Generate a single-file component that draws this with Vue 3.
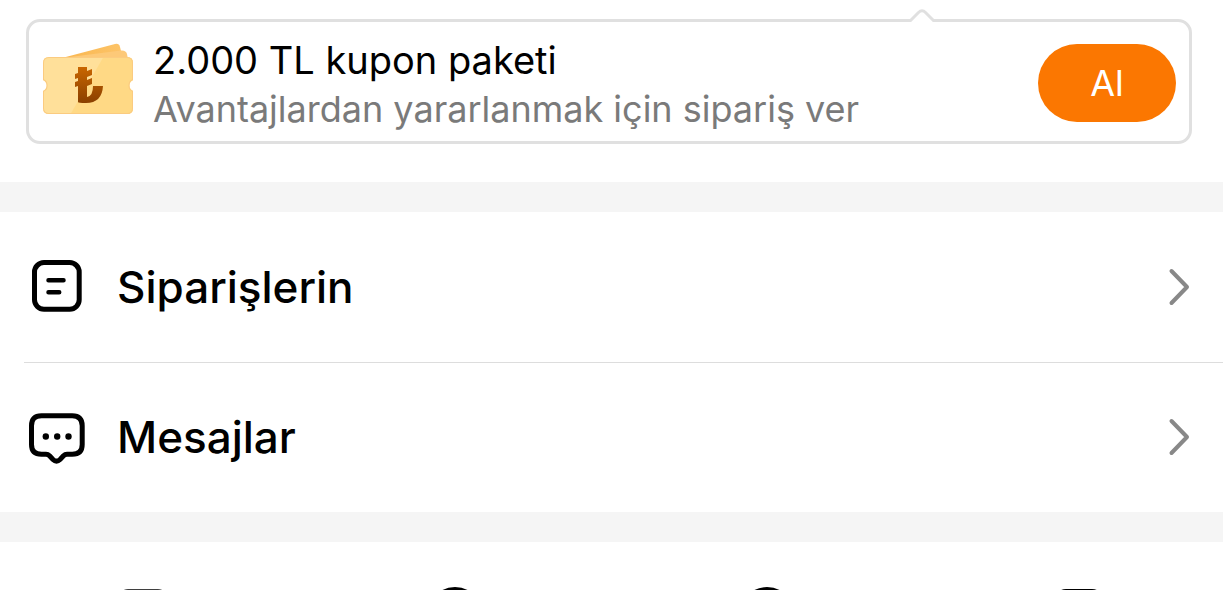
<script setup>
const rows = [
  { id: 'orders', label: 'Siparişlerin' },
  { id: 'messages', label: 'Mesajlar' },
]
</script>

<template>
  <main class="page">
    <section class="promo">
      <div class="card">
        <svg class="pointer" viewBox="0 0 28 14" aria-hidden="true">
          <path d="M2 11H26V14H2Z" fill="#fff" />
          <path d="M1 12.5H2.5L10.5 4.5Q14 1 17.5 4.5L25.5 12.5H27" fill="#fff" stroke="#e0e0e0" stroke-width="3" />
        </svg>
        <svg class="ticket" viewBox="0 0 92 72" aria-hidden="true">
          <defs>
            <linearGradient id="lira" x1="0" y1="0" x2="0" y2="1">
              <stop offset="0" stop-color="#c96600" />
              <stop offset="1" stop-color="#8a4000" />
            </linearGradient>
            <linearGradient id="back" x1="0" y1="0" x2="1" y2="0">
              <stop offset="0" stop-color="#f9b64f" />
              <stop offset="1" stop-color="#fdc468" />
            </linearGradient>
            <clipPath id="face">
              <path d="M7 14H85Q91 14 91 20V37A6 6 0 0 0 91 48V65Q91 71 85 71H7Q1 71 1 65V48A6 6 0 0 0 1 37V20Q1 14 7 14Z" />
            </clipPath>
          </defs>
          <path d="M20 15L73 1Q77 0 78 4L81 16Z" fill="url(#back)" />
          <path d="M20 15L79 7.500Q84 7 85 11L86 16Z" fill="#fdc978" />
          <g clip-path="url(#face)">
            <path d="M0 13H92V72H0Z" fill="#ffe09a" />
            <path d="M62 13H92V72H28Z" fill="#ffd985" />
            <path d="M7 14H85Q91 14 91 20V37A6 6 0 0 0 91 48V65Q91 71 85 71H7Q1 71 1 65V48A6 6 0 0 0 1 37V20Q1 14 7 14Z" fill="none" stroke="#fbcb80" stroke-width="2" />
          </g>
          <path d="M36 24H45V28L50 26V32L45 34V37L50 35V41L45 43V54Q51 53 51 43H61Q60 60 44 60Q36 60 36 59V43L33 44V39L36 38V35L33 36V31L36 30Z" fill="url(#lira)" />
        </svg>
        <div class="copy">
          <h2 class="title">2.000 TL kupon paketi</h2>
          <p class="subtitle">Avantajlardan yararlanmak için sipariş ver</p>
        </div>
        <button class="claim" type="button">Al</button>
      </div>
    </section>

    <nav class="menu">
      <a v-for="row in rows" :key="row.id" class="row" :href="'#' + row.id">
        <svg v-if="row.id === 'orders'" class="icon" viewBox="0 0 60 60" fill="none" stroke="#000" stroke-width="5" stroke-linecap="round" aria-hidden="true">
          <rect x="7.5" y="5.6" width="44.7" height="46.600" rx="9.5" />
          <path d="M21.500 23.300H36.500M21.500 35.300H32.200" stroke-width="4.5" />
        </svg>
        <svg v-else class="icon" viewBox="0 0 60 60" fill="none" stroke="#000" stroke-width="5" stroke-linejoin="round" aria-hidden="true">
          <path d="M14.500 8.800H45.200Q55.200 8.800 55.200 18.800V37.500Q55.200 47.300 45.200 47.300H40Q38 47.300 36.500 48.800L33 52.500Q29.500 56 26 52.500L22.500 48.800Q21 47.300 19 47.300H14.500Q4.500 47.300 4.500 37.500V18.800Q4.500 8.800 14.500 8.800Z" />
          <g fill="#000" stroke="none">
            <circle cx="18.800" cy="29.500" r="3.200" />
            <circle cx="30.200" cy="29.500" r="3.200" />
            <circle cx="41.500" cy="29.500" r="3.200" />
          </g>
        </svg>
        <span class="label">{{ row.label }}</span>
        <svg class="chevron" viewBox="0 0 24 40" fill="none" stroke="#888" stroke-width="4" stroke-linecap="round" stroke-linejoin="round" aria-hidden="true">
          <path d="M4.500 4L20 20L4.500 36" />
        </svg>
      </a>
    </nav>

    <section class="shortcuts">
      <svg class="shortcut" viewBox="0 0 56 56" fill="none" stroke="#000" stroke-width="5" aria-hidden="true">
        <rect x="4" y="5.700" width="48" height="46" rx="9" />
      </svg>
      <svg class="shortcut" viewBox="0 0 56 56" fill="none" stroke="#000" stroke-width="5" aria-hidden="true">
        <circle cx="28" cy="28" r="24.500" />
      </svg>
      <svg class="shortcut" viewBox="0 0 56 56" fill="none" stroke="#000" stroke-width="5" aria-hidden="true">
        <circle cx="28" cy="28" r="24.500" />
      </svg>
      <svg class="shortcut" viewBox="0 0 56 56" fill="none" stroke="#000" stroke-width="5" aria-hidden="true">
        <rect x="6" y="5.500" width="44" height="46" rx="9" />
      </svg>
    </section>
  </main>
</template>

<style>
body {
  margin: 0;
  background: #fff;
}
</style>

<style scoped>
.page {
  display: flex;
  flex-direction: column;
  height: 100vh;
  overflow: hidden;
  background: #fff;
  color: #000;
  font-family: Inter, "Liberation Sans", sans-serif;
}
.promo {
  flex: none;
  padding: 19px 31px 38px 26px;
}
.card {
  position: relative;
  display: flex;
  align-items: center;
  box-sizing: border-box;
  min-height: 125px;
  padding: 2px 13px 0;
  border: 3px solid #e0e0e0;
  border-radius: 14px;
}
.pointer {
  position: absolute;
  top: -14px;
  right: 253px;
  width: 28px;
  height: 14px;
}
.ticket {
  flex: none;
  width: 92px;
  height: 72px;
  margin-bottom: 8px;
}
.copy {
  flex: 1;
  min-width: 0;
  margin-left: 19px;
}
.title,
.subtitle {
  margin: 0;
  overflow: hidden;
  font-weight: 400;
  white-space: nowrap;
  text-overflow: ellipsis;
}
.title {
  font-size: 38px;
  line-height: 50px;
}
.subtitle {
  margin-top: 3px;
  color: #7a7a7a;
  font-size: 36px;
  line-height: 42px;
}
.claim {
  flex: none;
  width: 138px;
  height: 78px;
  padding: 0;
  border: 0;
  border-radius: 39px;
  background: #fb7701;
  color: #fff;
  font: inherit;
  font-size: 36px;
}
.menu {
  flex: none;
  border-top: 30px solid #f5f5f5;
  border-bottom: 30px solid #f5f5f5;
}
.row {
  display: flex;
  align-items: center;
  box-sizing: border-box;
  height: 150px;
  margin-left: 24px;
  padding: 0 32px 0 3px;
  color: inherit;
  text-decoration: none;
}
.row + .row {
  padding-bottom: 1px;
  border-top: 1px solid #ddd;
}
.icon {
  flex: none;
  width: 60px;
  height: 60px;
}
.label {
  flex: 1;
  margin-left: 30px;
  font-size: 44px;
  font-weight: 500;
  line-height: 56px;
}
.chevron {
  flex: none;
  width: 24px;
  height: 40px;
}
.shortcuts {
  display: flex;
  flex: 1;
  justify-content: space-between;
  min-height: 0;
  padding: 44px 116px 0 115px;
  overflow: hidden;
}
.shortcut {
  flex: none;
  width: 56px;
  height: 56px;
}
</style>
